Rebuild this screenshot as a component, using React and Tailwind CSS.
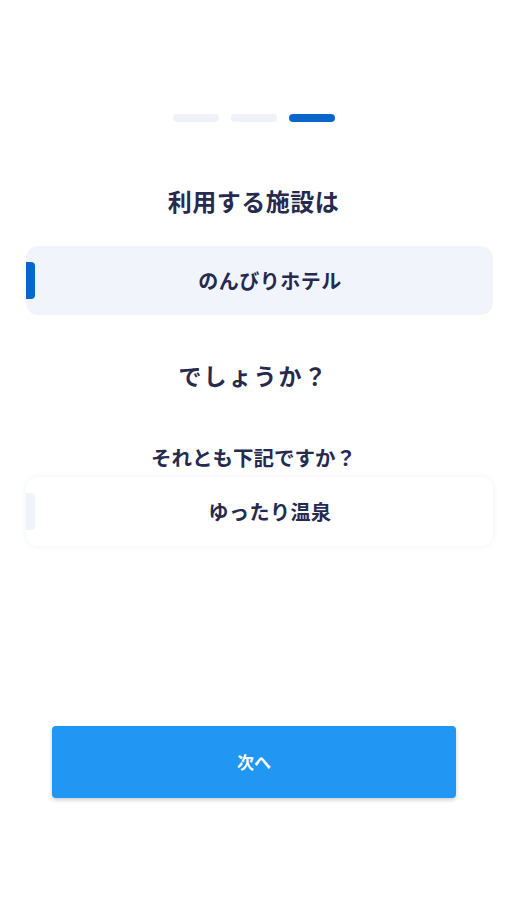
const steps = [false, false, true];

const Choice = ({ label, active }) => (
  <div
    className={`ml-[26px] mr-[14px] h-[69px] rounded-[12px] flex items-center relative ${
      active ? "bg-[#f1f5fb]" : "bg-white shadow-[0_0_6px_rgba(30,40,90,0.06)]"
    }`}
  >
    <div
      className={`w-[9px] h-[37px] rounded-r-[4px] ${
        active ? "bg-[#0a65cc]" : "bg-[#eef2f9]"
      }`}
    />
    <div className="flex-1 text-center pl-[16px] pr-[4px] text-[20px] font-bold text-[#262a4f] tracking-[0.5px]">
      {label}
    </div>
  </div>
);

export default function App() {
  return (
    <div
      className="w-[507px] h-[900px] bg-white flex flex-col"
      style={{ fontFamily: '"Noto Sans CJK JP", "Noto Sans", sans-serif' }}
    >
      {/* step indicator */}
      <div className="flex justify-center gap-[12px] pt-[114px]">
        {steps.map((on, i) => (
          <div
            key={i}
            className={`w-[46px] h-[8px] rounded-full ${on ? "bg-[#0a65cc]" : "bg-[#eff3f9]"}`}
          />
        ))}
      </div>

      <h2 className="mt-[63px] text-center text-[24px] leading-[32px] font-bold text-[#262a4f] tracking-[0.5px]">
        利用する施設は
      </h2>

      <div className="mt-[29px]">
        <Choice label="のんびりホテル" active />
      </div>

      <h2 className="mt-[44px] text-center text-[23px] leading-[32px] font-bold text-[#262a4f] tracking-[2px]">
        でしょうか？
      </h2>

      <p className="mt-[52px] text-center text-[20.5px] leading-[28px] font-bold text-[#262a4f]">
        それとも下記ですか？
      </p>

      <div className="mt-[6px]">
        <Choice label="ゆったり温泉" />
      </div>

      <button className="mt-[180px] ml-[52px] mr-[51px] h-[72px] rounded-[4px] bg-[#2196f3] text-white text-[17px] font-bold shadow-[0_2px_4px_rgba(0,0,0,0.2)]">
        次へ
      </button>
    </div>
  );
}
